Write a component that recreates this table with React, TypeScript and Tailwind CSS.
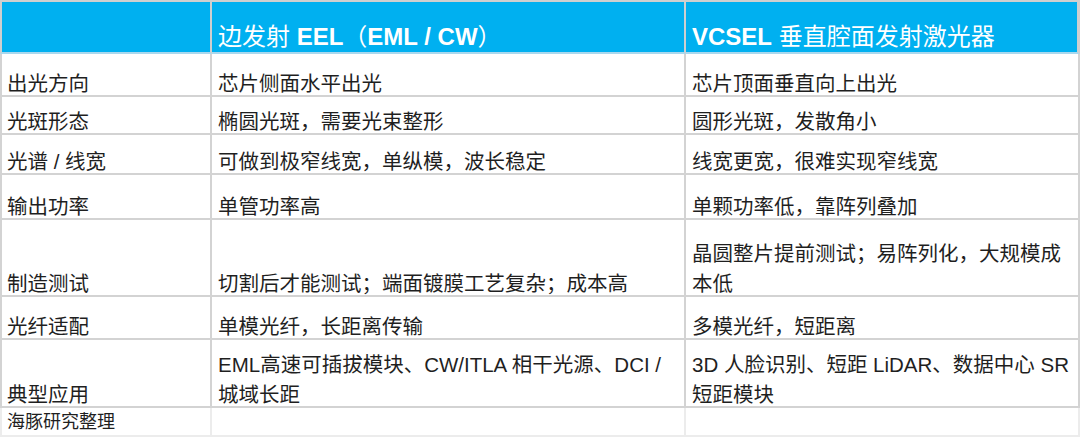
import React from "react";

type Row = {
  label: string;
  eel: string[];
  vcsel: string[];
  height: string;
};

const rows: Row[] = [
  { label: "出光方向", eel: ["芯片侧面水平出光"], vcsel: ["芯片顶面垂直向上出光"], height: "h-[43px]" },
  { label: "光斑形态", eel: ["椭圆光斑，需要光束整形"], vcsel: ["圆形光斑，发散角小"], height: "h-[38px]" },
  { label: "光谱 / 线宽", eel: ["可做到极窄线宽，单纵模，波长稳定"], vcsel: ["线宽更宽，很难实现窄线宽"], height: "h-[40px]" },
  { label: "输出功率", eel: ["单管功率高"], vcsel: ["单颗功率低，靠阵列叠加"], height: "h-[45px]" },
  {
    label: "制造测试",
    eel: ["切割后才能测试；端面镀膜工艺复杂；成本高"],
    vcsel: ["晶圆整片提前测试；易阵列化，大规模成", "本低"],
    height: "h-[77px]",
  },
  { label: "光纤适配", eel: ["单模光纤，长距离传输"], vcsel: ["多模光纤，短距离"], height: "h-[43px]" },
  {
    label: "典型应用",
    eel: ["EML高速可插拔模块、CW/ITLA 相干光源、DCI /", "城域长距"],
    vcsel: ["3D 人脸识别、短距 LiDAR、数据中心 SR", "短距模块"],
    height: "h-[68px]",
  },
];

const font = "font-['Liberation_Sans','Noto_Sans_CJK_SC',sans-serif]";

const Cell = ({ lines, height, first }: { lines: string[]; height: string; first?: boolean }) => (
  <div
    className={`${height} flex flex-col justify-end gap-[8px] border-r-2 border-b-2 border-[#d3d3d3] px-[6px] text-[20.5px] leading-[22px] text-[#1f1f1f] ${first ? "border-l-2 pl-[5px]" : ""}`}
  >
    {lines.map((l, i) => (
      <div key={i} className="whitespace-nowrap">
        {l}
      </div>
    ))}
  </div>
);

export default function App() {
  return (
    <div className={`w-[1080px] h-[437px] overflow-hidden bg-white ${font}`}>
      <div className="grid grid-cols-[212px_474px_394px]">
        {/* header */}
        <div className="h-[54px] bg-[#00b0f0] border-t-2 border-l-2 border-r-2 border-[#cfcfcf] border-b-2 border-b-[#a9d8ee]" />
        <div className="h-[54px] bg-[#00b0f0] border-t-2 border-r-2 border-[#cfcfcf] border-b-2 border-b-[#a9d8ee] flex items-end px-[6px] text-white text-[24px] leading-[30px] whitespace-nowrap">
          <span className="font-normal">边发射 </span>
          <span className="font-bold">&nbsp;EEL</span>
          <span className="font-normal">（</span>
          <span className="font-bold">EML / CW</span>
          <span className="font-normal">）</span>
        </div>
        <div className="h-[54px] bg-[#00b0f0] border-t-2 border-r-[3px] border-[#cfcfcf] border-b-2 border-b-[#a9d8ee] flex items-end px-[6px] text-white text-[24px] leading-[30px] whitespace-nowrap">
          <span className="font-bold">VCSEL</span>
          <span className="font-normal">&nbsp;垂直腔面发射激光器</span>
        </div>

        {rows.map((r) => (
          <React.Fragment key={r.label}>
            <Cell lines={[r.label]} height={r.height} first />
            <Cell lines={r.eel} height={r.height} />
            <Cell lines={r.vcsel} height={r.height} />
          </React.Fragment>
        ))}

        {/* source row */}
        <div className="h-[29px] flex items-center border-l-2 border-r-2 border-b-2 border-[#ececec] pl-[5px] text-[18px] leading-[24px] text-[#1f1f1f] whitespace-nowrap">
          海豚研究整理
        </div>
        <div className="h-[29px] border-r-2 border-b-2 border-[#ececec]" />
        <div className="h-[29px] border-r-2 border-b-2 border-[#ececec]" />
      </div>
    </div>
  );
}
